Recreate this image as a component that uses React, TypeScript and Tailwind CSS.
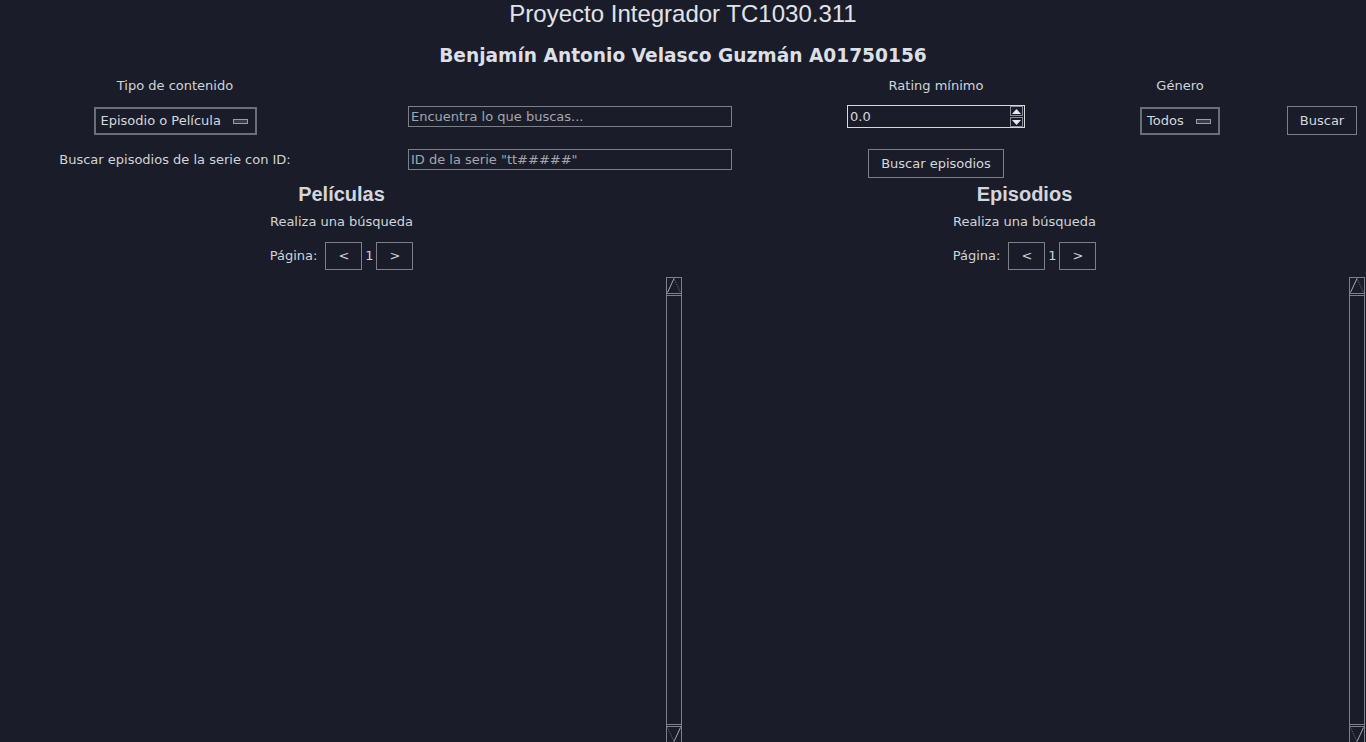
import React from 'react';

const dv = { fontFamily: '"DejaVu Sans", sans-serif' };
const lib = { fontFamily: '"Liberation Sans", Arial, sans-serif' };

const OptionMenu = ({ label, width, className }: { label: string; width: string; className?: string }) => (
    <div
        className={`${width} ${className ?? ''} h-[28px] flex items-center justify-between pl-[5px] pr-[7px] border-2 border-[#6c6f79] text-[13px] text-[#d4d7de]`}
        style={dv}
    >
        <span>{label}</span>
        <span className="w-[15px] h-[5px] border border-[#9a9da5] bg-[#3a3d48]" />
    </div>
);

const Entry = ({ placeholder, className }: { placeholder: string; className?: string }) => (
    <div
        className={`w-[324px] h-[21px] flex items-center px-[2px] border border-[#7b7f88] text-[13px] text-[#a3a6ae] ${className ?? ''}`}
        style={dv}
    >
        {placeholder}
    </div>
);

const TkButton = ({ label, className }: { label: string; className?: string }) => (
    <div
        className={`h-[29px] flex items-center justify-center border border-[#7c7f88] text-[13px] text-[#d4d7de] ${className ?? ''}`}
        style={dv}
    >
        {label}
    </div>
);

const Spinbox = () => (
    <div className="mt-[11px] w-[178px] h-[23px] flex items-center justify-between pl-[2px] pr-[1px] border border-[#d6d8dc] text-[13px] text-[#d4d7de]" style={dv}>
        <span>0.0</span>
        <div className="flex flex-col">
            <div className="w-[13px] h-[10px] border border-[#8a8d95] flex items-center justify-center">
                <svg width="9" height="5" viewBox="0 0 9 5"><polygon points="4.5,0 9,5 0,5" fill="#e6e8ec" /></svg>
            </div>
            <div className="w-[13px] h-[10px] border border-[#8a8d95] flex items-center justify-center mt-[1px]">
                <svg width="9" height="5" viewBox="0 0 9 5"><polygon points="0,0 9,0 4.5,5" fill="#e6e8ec" /></svg>
            </div>
        </div>
    </div>
);

const Scrollbar = () => (
    <div className="w-[16px] h-full flex flex-col border-l border-r border-t border-[#7d8089]">
        <div className="h-[16px] border-b border-[#7d8089]">
            <svg width="14" height="15" viewBox="0 0 14 15">
                <line x1="0.5" y1="14.5" x2="7" y2="0.5" stroke="#a8abb3" strokeWidth="1" />
                <line x1="7" y1="0.5" x2="13.5" y2="14.5" stroke="#6c6f78" strokeWidth="1" strokeDasharray="1 1" />
            </svg>
        </div>
        <div className="flex-1 mt-[1px] mb-[1px] border-t border-b border-[#7d8089]" />
        <div className="h-[16px] border-t border-[#7d8089]">
            <svg width="14" height="15" viewBox="0 0 14 15">
                <line x1="0.5" y1="0.5" x2="7" y2="14.5" stroke="#6c6f78" strokeWidth="1" strokeDasharray="1 1" />
                <line x1="7" y1="14.5" x2="13.5" y2="0.5" stroke="#a8abb3" strokeWidth="1" />
            </svg>
        </div>
    </div>
);

const ResultPanel = ({ title }: { title: string }) => (
    <div className="w-[683px] flex flex-col">
        <div className="h-[24px] flex items-center justify-center text-[20px] font-bold text-[#d3d6dd]" style={lib}>
            {title}
        </div>
        <div className="h-[32px] flex items-center justify-center text-[13px] text-[#d0d3da]" style={dv}>
            Realiza una búsqueda
        </div>
        <div className="h-[39px] flex items-start justify-center pt-[4px] text-[13px] text-[#d0d3da]" style={dv}>
            <div className="h-[28px] flex items-center">
                <span className="mr-[8px]">Página:</span>
                <div className="w-[37px] h-[28px] border border-[#7c7f88] flex items-center justify-center">&lt;</div>
                <span className="w-[14px] text-center">1</span>
                <div className="w-[37px] h-[28px] border border-[#7c7f88] flex items-center justify-center">&gt;</div>
            </div>
        </div>
        <div className="h-[465px] flex">
            <div className="w-[666px]" />
            <Scrollbar />
        </div>
    </div>
);

export default function App() {
    return (
        <div className="w-[1366px] h-[742px] overflow-hidden bg-[#1a1d29] flex flex-col">
            <div className="h-[28px] flex items-center justify-center text-[24px] text-[#e0e3ea]" style={lib}>
                Proyecto Integrador TC1030.311
            </div>
            <div className="h-[50px] flex items-center justify-center pt-[6px] text-[18.6px] font-bold text-[#dcdfe6]" style={dv}>
                Benjamín Antonio Velasco Guzmán A01750156
            </div>

            <div className="grid grid-cols-[350px_440px_292px_196px_88px] grid-rows-[16px_48px_40px] text-[13px] text-[#d0d3da]" style={dv}>
                <div className="flex items-center justify-center">Tipo de contenido</div>
                <div />
                <div className="flex items-center justify-center">Rating mínimo</div>
                <div className="flex items-center justify-center">Género</div>
                <div />

                <div className="flex justify-center items-start">
                    <OptionMenu label="Episodio o Película" width="w-[163px]" className="mt-[13px]" />
                </div>
                <div className="flex justify-center items-start">
                    <Entry placeholder="Encuentra lo que buscas..." className="mt-[12px]" />
                </div>
                <div className="flex justify-center items-start">
                    <Spinbox />
                </div>
                <div className="flex justify-center items-start">
                    <OptionMenu label="Todos" width="w-[80px]" className="mt-[13px]" />
                </div>
                <div className="flex justify-center items-start">
                    <TkButton label="Buscar" className="w-[70px] mt-[12px]" />
                </div>

                <div className="flex justify-center items-start pt-[8px]">Buscar episodios de la serie con ID:</div>
                <div className="flex justify-center items-start">
                    <Entry placeholder={'ID de la serie "tt#####"'} className="mt-[7px]" />
                </div>
                <div className="flex justify-center items-start">
                    <TkButton label="Buscar episodios" className="w-[136px] mt-[7px]" />
                </div>
                <div />
                <div />
            </div>

            <div className="flex">
                <ResultPanel title="Películas" />
                <ResultPanel title="Episodios" />
            </div>
        </div>
    );
}
